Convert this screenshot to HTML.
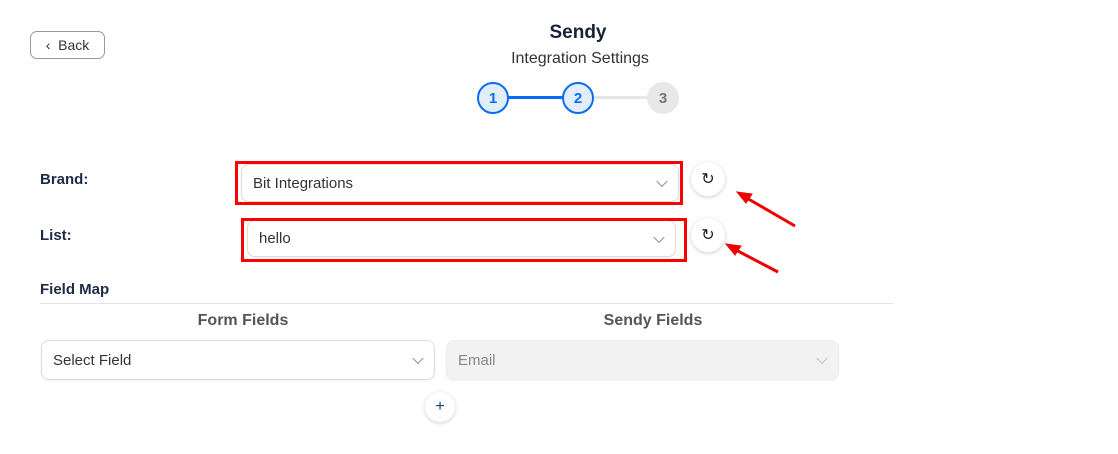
<!DOCTYPE html><html><head><style>
body{margin:0;width:1118px;height:454px;background:#fff;font-family:"Liberation Sans",sans-serif;position:relative;overflow:hidden}
.a{position:absolute}
.sel{position:absolute;border:1px solid #ddd;border-radius:8px;background:#fff;box-sizing:border-box;font-size:15px;color:#333;display:flex;align-items:center;padding-left:11px;box-shadow:0 1px 2px rgba(0,0,0,.06)}
.chev{position:absolute;right:12px;top:50%;width:7px;height:7px;border-right:1.3px solid #888;border-bottom:1.3px solid #888;transform:translateY(-70%) rotate(45deg)}
.red{position:absolute;border:3px solid #f00;box-sizing:border-box}
.rb{position:absolute;width:34px;height:34px;border-radius:50%;background:#fff;box-shadow:0 1px 4px rgba(0,0,0,.2);display:flex;align-items:center;justify-content:center;font-size:16px;color:#222}
.st{position:absolute;width:32px;height:32px;border-radius:50%;box-sizing:border-box;display:flex;align-items:center;justify-content:center;font-weight:bold;font-size:15px}
.lbl{position:absolute;font-size:15px;font-weight:bold;color:#1e2a44}
</style></head><body>
<div class="a" style="left:30px;top:31px;width:75px;height:28px;border:1px solid #999;border-radius:7px;box-sizing:border-box;font-size:14px;color:#333;display:flex;align-items:center;justify-content:center">‹&nbsp; Back</div>
<div class="a" style="left:478px;width:200px;top:22px;text-align:center;font-size:19px;font-weight:bold;color:#1a2238">Sendy</div>
<div class="a" style="left:430px;width:300px;top:50px;text-align:center;font-size:16px;color:#333">Integration Settings</div>
<div class="a" style="left:508px;top:96px;width:56px;height:3px;background:#0a6cf5"></div>
<div class="a" style="left:592px;top:96px;width:56px;height:3px;background:#e6e6e6"></div>
<div class="st" style="left:477px;top:82px;border:2px solid #0a6cf5;background:#e3eefd;color:#0a6cf5">1</div>
<div class="st" style="left:562px;top:82px;border:2px solid #0a6cf5;background:#e3eefd;color:#0a6cf5">2</div>
<div class="st" style="left:647px;top:82px;background:#e8e8e8;color:#777">3</div>
<div class="lbl" style="left:40px;top:171px">Brand:</div>
<div class="lbl" style="left:40px;top:227px">List:</div>
<div class="sel" style="left:241px;top:164px;width:438px;height:38px">Bit Integrations<span class="chev"></span></div>
<div class="red" style="left:235px;top:161px;width:448px;height:44px"></div>
<div class="sel" style="left:247px;top:220px;width:429px;height:37px">hello<span class="chev"></span></div>
<div class="red" style="left:241px;top:218px;width:446px;height:44px"></div>
<div class="rb" style="left:691px;top:162px">↻</div>
<div class="rb" style="left:691px;top:218px">↻</div>
<svg class="a" style="left:0;top:0" width="1118" height="454"><g stroke="#e00" stroke-width="3" fill="#e00">
<line x1="795" y1="226" x2="745" y2="197"/><polygon points="737,192 752,194 746,203" stroke-width="1"/>
<line x1="778" y1="272" x2="734" y2="249"/><polygon points="726,244 741,246 735,255" stroke-width="1"/></g></svg>
<div class="lbl" style="left:40px;top:281px">Field Map</div>
<div class="a" style="left:40px;top:303px;width:853px;height:1px;background:#e2e2e2"></div>
<div class="a" style="left:143px;width:200px;top:312px;text-align:center;font-size:16px;font-weight:bold;color:#555">Form Fields</div>
<div class="a" style="left:553px;width:200px;top:312px;text-align:center;font-size:16px;font-weight:bold;color:#555">Sendy Fields</div>
<div class="sel" style="left:41px;top:340px;width:394px;height:40px">Select Field<span class="chev"></span></div>
<div class="sel" style="left:446px;top:340px;width:393px;height:40px;background:#f2f2f2;color:#888;border-color:#eee">Email<span class="chev" style="border-color:#bbb"></span></div>
<div class="rb" style="left:425px;top:392px;width:30px;height:30px;font-size:16px;color:#1a3c6e">+</div>
</body></html>
